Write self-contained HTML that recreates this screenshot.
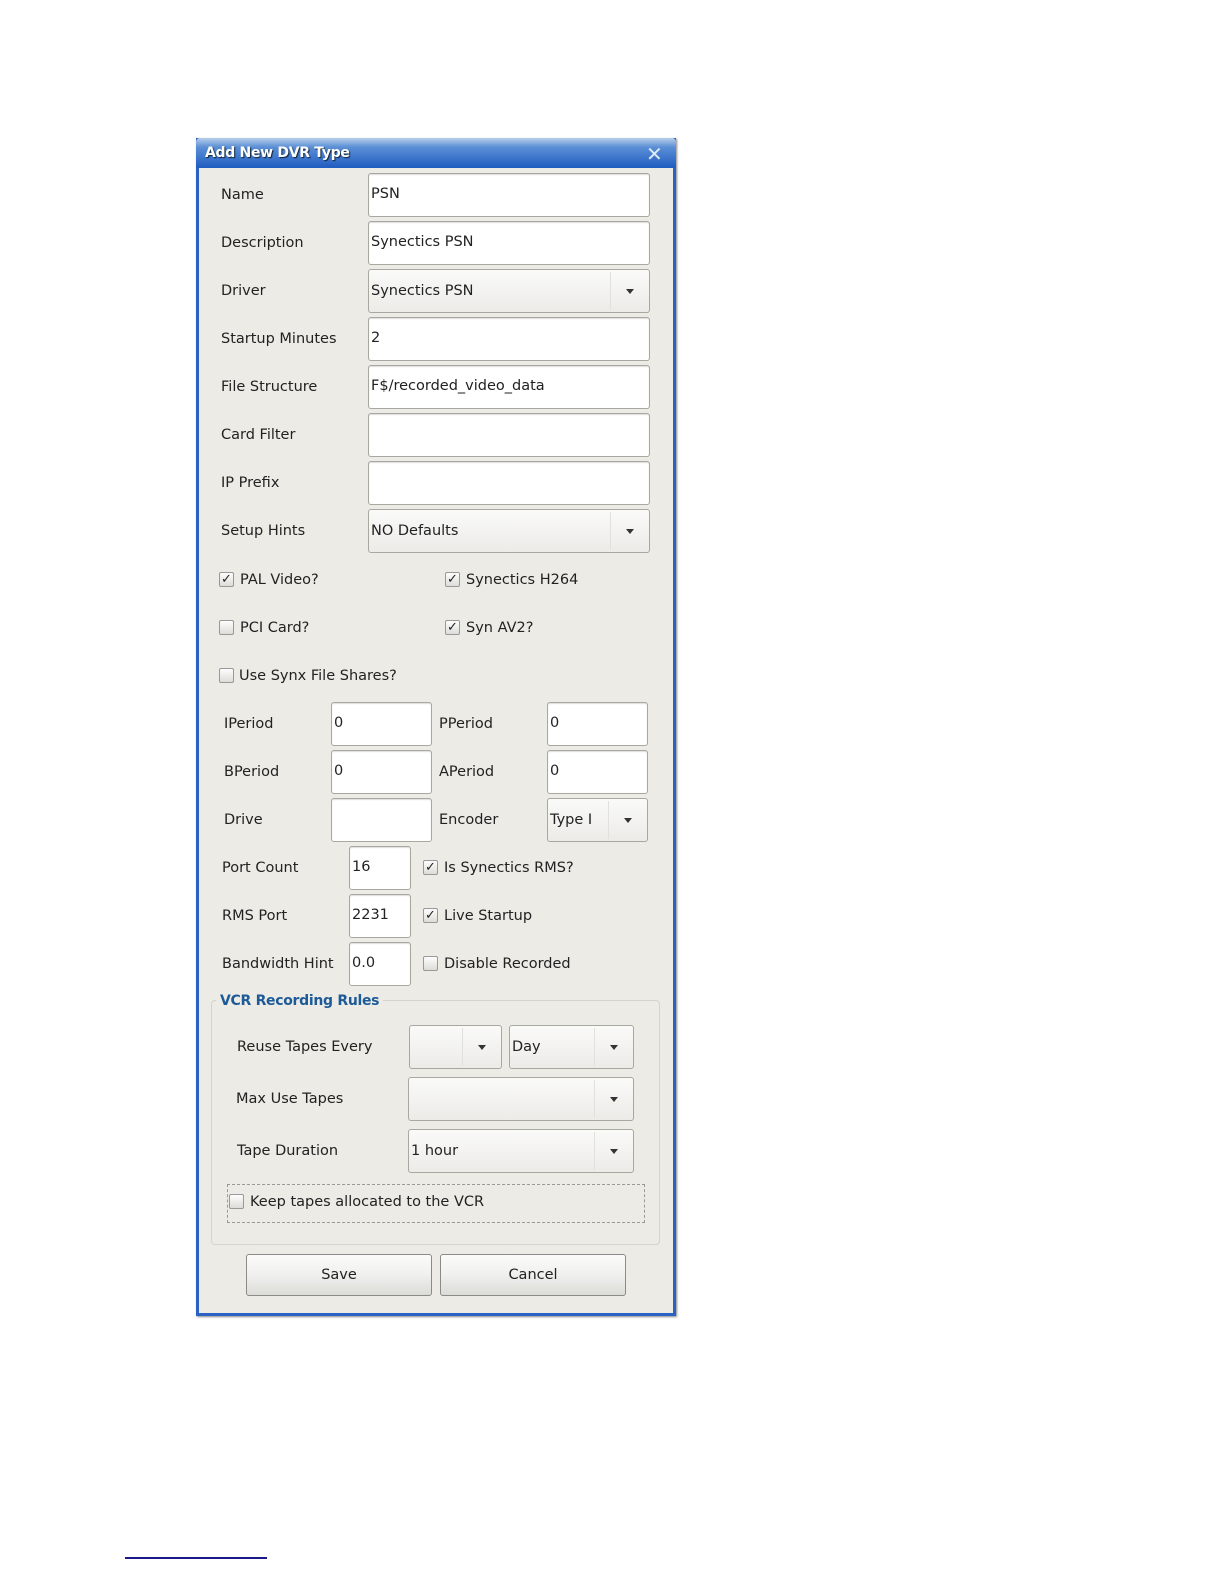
<!DOCTYPE html>
<html><head><meta charset="utf-8"><style>
body{margin:0;width:1224px;height:1584px;background:#fff;position:relative;font-family:"DejaVu Sans","Liberation Sans",sans-serif;font-size:14.5px;color:#222;overflow:hidden}
.a{position:absolute}
.dlg{left:196px;top:138px;width:474px;height:1175px;background:#ecebe6;border:3px solid #2a63c4;border-top:none;box-shadow:1px 1px 2px #888}
.title{left:196px;top:138px;width:480px;height:30px;background:linear-gradient(#b8cfe9 0%,#5b8fd6 30%,#1f5cc0 100%);border-radius:4px 4px 0 0}
.tt{left:205px;top:145px;color:#fff;font-weight:bold;font-size:14px;letter-spacing:-0.3px;text-shadow:1px 1px 1px #123}
.in{background:#fff;border:1px solid #a8a8a0;border-radius:3px;box-shadow:inset 0 1px 1px #ddd;box-sizing:border-box;padding-left:2px;line-height:40px}
.cb{background:linear-gradient(#fafaf8,#ecebe8);border:1px solid #a8a8a0;border-radius:3px;box-sizing:border-box;padding-left:2px}
.arr{position:absolute;right:0;top:2px;bottom:2px;width:38px;border-left:1px solid #e0e0dc}
.arr:after{content:"";position:absolute;left:15px;top:50%;margin-top:-2px;border:4px solid transparent;border-top:5px solid #333;border-bottom:0}
.lb{line-height:20px}
.ck{width:15px;height:15px;border:1px solid #999;border-radius:2px;background:linear-gradient(#fdfdfd,#dcdcd8);box-sizing:border-box;font-size:13px;line-height:13px;text-align:center}
.btn{background:linear-gradient(#fbfbfa 0%,#f0f0ee 50%,#dcdcd8 100%);border:1px solid #8a8a88;border-radius:3px;box-sizing:border-box;text-align:center;line-height:40px}
</style></head><body>
<div class="a dlg"></div>
<div class="a title"></div>
<div class="a tt">Add New DVR Type</div>
<div class="a" style="left:646px;top:142px;color:#dfe9f7;font-size:20px;font-weight:bold">✕</div>

<div class="a lb" style="left:221px;top:185px">Name</div>
<div class="a in" style="left:368px;top:173px;width:282px;height:44px">PSN</div>
<div class="a lb" style="left:221px;top:233px">Description</div>
<div class="a in" style="left:368px;top:221px;width:282px;height:44px">Synectics PSN</div>
<div class="a lb" style="left:221px;top:281px">Driver</div>
<div class="a cb" style="left:368px;top:269px;width:282px;height:44px;line-height:42px">Synectics PSN<div class="arr"></div></div>
<div class="a lb" style="left:221px;top:329px">Startup Minutes</div>
<div class="a in" style="left:368px;top:317px;width:282px;height:44px">2</div>
<div class="a lb" style="left:221px;top:377px">File Structure</div>
<div class="a in" style="left:368px;top:365px;width:282px;height:44px">F$/recorded_video_data</div>
<div class="a lb" style="left:221px;top:425px">Card Filter</div>
<div class="a in" style="left:368px;top:413px;width:282px;height:44px"></div>
<div class="a lb" style="left:221px;top:473px">IP Prefix</div>
<div class="a in" style="left:368px;top:461px;width:282px;height:44px"></div>
<div class="a lb" style="left:221px;top:521px">Setup Hints</div>
<div class="a cb" style="left:368px;top:509px;width:282px;height:44px;line-height:42px">NO Defaults<div class="arr"></div></div>

<div class="a ck" style="left:219px;top:572px">✓</div><div class="a lb" style="left:240px;top:570px">PAL Video?</div>
<div class="a ck" style="left:445px;top:572px">✓</div><div class="a lb" style="left:466px;top:570px">Synectics H264</div>
<div class="a ck" style="left:219px;top:620px"></div><div class="a lb" style="left:240px;top:618px">PCI Card?</div>
<div class="a ck" style="left:445px;top:620px">✓</div><div class="a lb" style="left:466px;top:618px">Syn AV2?</div>
<div class="a ck" style="left:219px;top:668px"></div><div class="a lb" style="left:239px;top:666px">Use Synx File Shares?</div>

<div class="a lb" style="left:224px;top:714px">IPeriod</div>
<div class="a in" style="left:331px;top:702px;width:101px;height:44px">0</div>
<div class="a lb" style="left:439px;top:714px">PPeriod</div>
<div class="a in" style="left:547px;top:702px;width:101px;height:44px">0</div>
<div class="a lb" style="left:224px;top:762px">BPeriod</div>
<div class="a in" style="left:331px;top:750px;width:101px;height:44px">0</div>
<div class="a lb" style="left:439px;top:762px">APeriod</div>
<div class="a in" style="left:547px;top:750px;width:101px;height:44px">0</div>
<div class="a lb" style="left:224px;top:810px">Drive</div>
<div class="a in" style="left:331px;top:798px;width:101px;height:44px"></div>
<div class="a lb" style="left:439px;top:810px">Encoder</div>
<div class="a cb" style="left:547px;top:798px;width:101px;height:44px;line-height:42px">Type I<div class="arr"></div></div>

<div class="a lb" style="left:222px;top:858px">Port Count</div>
<div class="a in" style="left:349px;top:846px;width:62px;height:44px">16</div>
<div class="a ck" style="left:423px;top:860px">✓</div><div class="a lb" style="left:444px;top:858px">Is Synectics RMS?</div>
<div class="a lb" style="left:222px;top:906px">RMS Port</div>
<div class="a in" style="left:349px;top:894px;width:62px;height:44px">2231</div>
<div class="a ck" style="left:423px;top:908px">✓</div><div class="a lb" style="left:444px;top:906px">Live Startup</div>
<div class="a lb" style="left:222px;top:954px">Bandwidth Hint</div>
<div class="a in" style="left:349px;top:942px;width:62px;height:44px">0.0</div>
<div class="a ck" style="left:423px;top:956px"></div><div class="a lb" style="left:444px;top:954px">Disable Recorded</div>

<div class="a" style="left:211px;top:1000px;width:449px;height:245px;border:1px solid #d4d3cc;border-radius:4px;box-sizing:border-box"></div>
<div class="a" style="left:216px;top:991px;padding:0 4px;background:#ecebe6;color:#1d5a98;font-weight:bold;font-size:14px;letter-spacing:-0.3px;line-height:20px">VCR Recording Rules</div>
<div class="a lb" style="left:237px;top:1037px">Reuse Tapes Every</div>
<div class="a cb" style="left:409px;top:1025px;width:93px;height:44px"><div class="arr"></div></div>
<div class="a cb" style="left:509px;top:1025px;width:125px;height:44px;line-height:42px">Day<div class="arr"></div></div>
<div class="a lb" style="left:236px;top:1089px">Max Use Tapes</div>
<div class="a cb" style="left:408px;top:1077px;width:226px;height:44px"><div class="arr"></div></div>
<div class="a lb" style="left:237px;top:1141px">Tape Duration</div>
<div class="a cb" style="left:408px;top:1129px;width:226px;height:44px;line-height:42px">1 hour<div class="arr"></div></div>
<div class="a" style="left:227px;top:1184px;width:418px;height:39px;border:1px dashed #999;box-sizing:border-box"></div>
<div class="a ck" style="left:229px;top:1194px"></div><div class="a lb" style="left:250px;top:1192px">Keep tapes allocated to the VCR</div>

<div class="a btn" style="left:246px;top:1254px;width:186px;height:42px">Save</div>
<div class="a btn" style="left:440px;top:1254px;width:186px;height:42px">Cancel</div>

<div class="a" style="left:125px;top:1557px;width:142px;height:2px;background:#1a1a8a"></div>
</body></html>
